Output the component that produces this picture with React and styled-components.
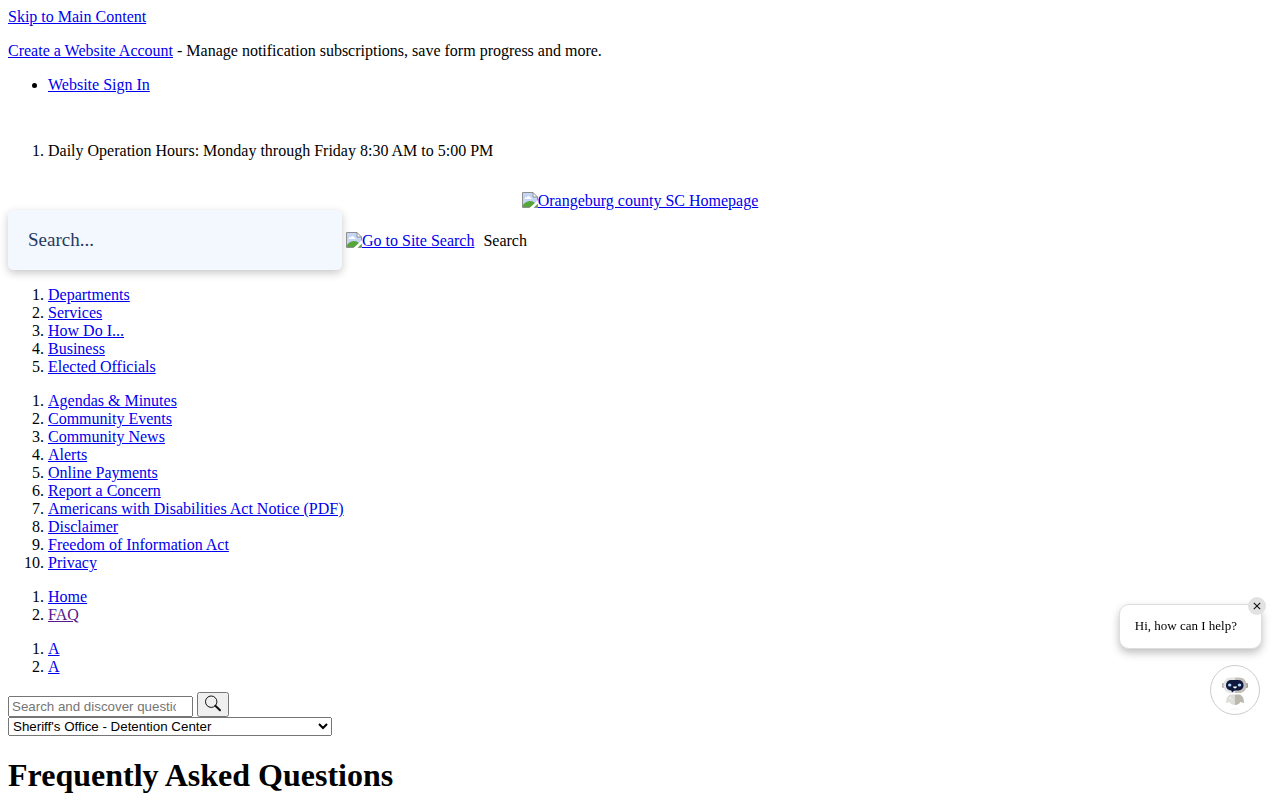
import React from 'react';
import styled, { createGlobalStyle } from 'styled-components';

const departments = ['Departments', 'Services', 'How Do I...', 'Business', 'Elected Officials'];

const quickLinks = [
  'Agendas & Minutes',
  'Community Events',
  'Community News',
  'Alerts',
  'Online Payments',
  'Report a Concern',
  'Americans with Disabilities Act Notice (PDF)',
  'Disclaimer',
  'Freedom of Information Act',
  'Privacy',
];

function LinkList({ items }) {
  return (
    <OrderedList>
      {items.map((item, index) => (
        <li key={index}><Link href="#">{item}</Link></li>
      ))}
    </OrderedList>
  );
}

function PictureIcon() {
  return (
    <PictureSvg viewBox="0 0 16 16" aria-hidden="true">
      <path d="M0.5 15.5V0.5H11L15.5 5V15.5Z" fill="#c5d5f4" />
      <path d="M2.5 7C2.5 5.4 4 5 4.8 5.5C5.4 3.8 8 4 8.2 5.8C9.2 5.7 9.8 6.2 9.6 7Z" fill="#fff" />
      <path d="M1 15V13C3 10.5 5.5 9 8 9C10.5 9 13 10.5 15 13V15Z" fill="#57a63c" />
      <path d="M11 0.5V5H15.5Z" fill="#fff" />
      <path d="M11 0.5V5H15.5M0.5 15.5V0.5H11L15.5 5V15.5Z" fill="none" stroke="#8f8f8f" />
      <path d="M7.5 16L16 8V11.5L11.5 16Z" fill="#fff" />
    </PictureSvg>
  );
}

function SearchIcon() {
  return (
    <SearchSvg viewBox="0 0 17 17" aria-hidden="true">
      <circle cx="6.2" cy="6.7" r="5.7" fill="none" stroke="#111" strokeWidth="1" />
      <path d="M10.4 10.8L15 15.2" stroke="#111" strokeWidth="2" strokeLinecap="round" />
    </SearchSvg>
  );
}

function Robot() {
  return (
    <RobotSvg viewBox="0 0 48 48" aria-hidden="true">
      <rect x="11" y="17" width="3" height="5" rx="1" fill="#b5b2ae" />
      <rect x="34" y="17" width="3" height="5" rx="1" fill="#a5a29e" />
      <path d="M24 11.5H20C15 11.5 12.5 15 12.5 19.5C12.5 24.5 16 27 20 27H24Z" fill="#e5e4e5" />
      <path d="M24 11.5H28C33 11.5 35.5 15 35.5 19.5C35.5 24.5 32 27 28 27H24Z" fill="#c4c0bb" />
      <rect x="15" y="14" width="17.5" height="10.5" rx="5" fill="#11193d" />
      <path d="M20 23L21 26.5L24 24Z" fill="#11193d" />
      <ellipse cx="18.7" cy="19" rx="1.7" ry="1.5" fill="#afd7ff" />
      <ellipse cx="28.5" cy="19" rx="1.7" ry="1.5" fill="#afd7ff" />
      <path d="M22 20.5H26C25.5 23 22.5 23 22 20.5Z" fill="#fff" />
      <path d="M19 28.5H24V39C21 39 19.4 37.6 18.8 36L15 37C15 33 16 30 19 28.5Z" fill="#dedcd7" />
      <path d="M24 28.5H29C32 30 33 33 33 37L29.2 36C28.6 37.6 27 39 24 39Z" fill="#bbb8ae" />
      <path d="M18.5 33L20 31M20.5 33.5H21.5" stroke="#fff" />
      <ellipse cx="24" cy="43" rx="5" ry="0.6" fill="#f1f1f1" />
    </RobotSvg>
  );
}

function App() {
  return (
    <Page>
      <GlobalStyle />
      <Link href="#main">Skip to Main Content</Link>
      <p><Link href="#">Create a Website Account</Link> - Manage notification subscriptions, save form progress and more.</p>
      <ul>
        <li><Link href="#">Website Sign In</Link></li>
      </ul>
      <Hours>
        <li>Daily Operation Hours: Monday through Friday 8:30 AM to 5:00 PM</li>
      </Hours>
      <Banner>
        <Link href="#"><PictureIcon />Orangeburg county SC Homepage</Link>
      </Banner>
      <SiteSearch>
        <SiteInput type="text" placeholder="Search..." aria-label="Site search" />
        <Link href="#"><PictureIcon />Go to Site Search</Link>
        <SearchText>Search</SearchText>
      </SiteSearch>
      <nav>
        <LinkList items={departments} />
        <LinkList items={quickLinks} />
      </nav>
      <OrderedList>
        <li><Link href="#">Home</Link></li>
        <li><Link href="#" $visited>FAQ</Link></li>
      </OrderedList>
      <LinkList items={['A', 'A']} />
      <main id="main">
        <FaqSearch>
          <FaqInput type="text" placeholder="Search and discover questions" aria-label="Search and discover questions" />
          <FaqButton type="button" aria-label="Search questions"><SearchIcon /></FaqButton>
        </FaqSearch>
        <Category aria-label="Category">
          <option>Sheriff's Office - Detention Center</option>
        </Category>
        <Title>Frequently Asked Questions</Title>
      </main>
      <Chat>
        <Bubble>
          Hi, how can I help?
          <Close type="button" aria-label="Close">
            <CloseSvg viewBox="0 0 8 8" aria-hidden="true">
              <path d="M0.8 0.8L7.2 7.2M7.2 0.8L0.8 7.2" stroke="#111" strokeWidth="1.1" />
            </CloseSvg>
          </Close>
        </Bubble>
        <ChatButton type="button" aria-label="Open chat"><Robot /></ChatButton>
      </Chat>
    </Page>
  );
}

export default App;


const GlobalStyle = createGlobalStyle`
body {
  margin: 0;
  background-color: white;
  color: black;
  font-family: "Liberation Serif", "Times New Roman", serif;
  font-size: 16px;
  line-height: 18px;
}
`

const Page = styled.div`
padding: 8px;
`

const Link = styled.a`
color: ${({ $visited }) => ($visited ? '#551a8b' : '#0000ee')};
text-decoration: underline;
`

const OrderedList = styled.ol`
margin: 16px 0;
padding-left: 40px;
`

const Hours = styled(OrderedList)`
margin: 48px 0 32px;
`

const Banner = styled.header`
text-align: center;
`

const PictureSvg = styled.svg`
width: 16px;
height: 16px;
vertical-align: -2px;
`

const SiteSearch = styled.div`
display: flex;
align-items: baseline;
gap: 4px;
`

const SiteInput = styled.input`
box-sizing: border-box;
width: 334px;
height: 60px;
padding: 0 20px;
border: none;
border-radius: 5px;
background-color: #f3f7fe;
box-shadow: 0 3px 8px rgba(0, 0, 0, 0.22);
color: #1f3b63;
font-family: inherit;
font-size: 19px;

&::placeholder{
  color: #1f3b63;
  opacity: 1;
}
`

const SearchText = styled.span`
margin-left: 5px;
`

const FaqSearch = styled.div`
display: flex;
align-items: flex-end;
gap: 4px;
`

const FaqInput = styled.input`
box-sizing: border-box;
width: 185px;
height: 21px;
padding: 1px 15px 1px 2px;
font-family: "Liberation Sans", Arial, sans-serif;
`

const FaqButton = styled.button`
display: flex;
align-items: flex-start;
justify-content: center;
width: 32px;
height: 25px;
padding: 1px 6px;
`

const SearchSvg = styled.svg`
flex: none;
width: 17px;
height: 17px;
`

const Category = styled.select`
display: block;
width: 324px;
height: 19px;
font-family: "Liberation Sans", Arial, sans-serif;
`

const Title = styled.h1`
margin: 21px 0;
font-size: 32px;
font-weight: bold;
line-height: 37px;
`

const Chat = styled.aside`
position: fixed;
right: 18px;
bottom: 85px;
display: flex;
flex-direction: column;
align-items: flex-end;
gap: 16px;
`

const Bubble = styled.div`
position: relative;
padding: 12px 24px 14px 15px;
border: 1px solid #ddd;
border-radius: 10px;
background-color: white;
box-shadow: 0 4px 8px rgba(0, 0, 0, 0.25);
font-size: 13px;
line-height: 17px;
`

const Close = styled.button`
position: absolute;
top: -8px;
right: -5px;
display: flex;
align-items: center;
justify-content: center;
width: 18px;
height: 18px;
padding: 0;
border: none;
border-radius: 50%;
background-color: #e2e2e2;
`

const CloseSvg = styled.svg`
flex: none;
width: 8px;
height: 8px;
`

const ChatButton = styled.button`
width: 50px;
height: 50px;
margin-right: 2px;
padding: 0;
border: 1px solid #ccc;
border-radius: 50%;
background-color: white;
`

const RobotSvg = styled.svg`
display: block;
width: 48px;
height: 48px;
`
